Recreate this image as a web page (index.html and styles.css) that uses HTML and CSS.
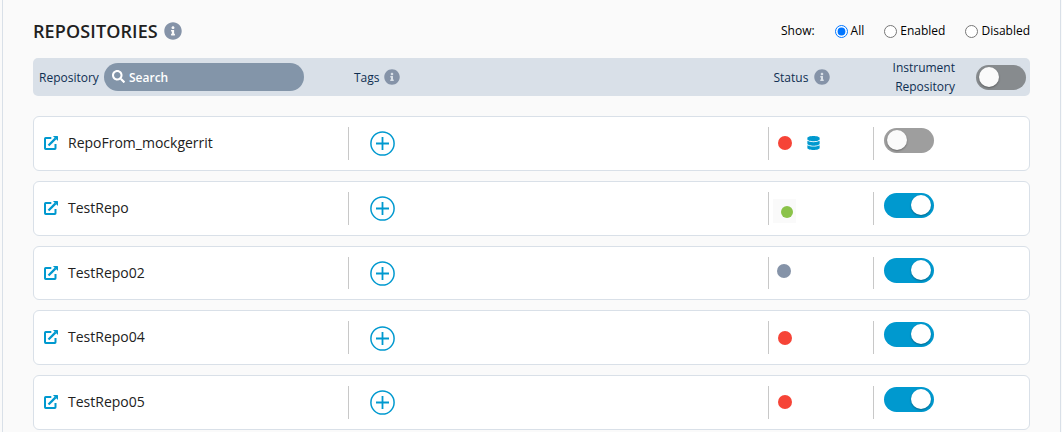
FILE: index.html
```
<!DOCTYPE html>
<html lang="en">
<head>
<meta charset="utf-8">
<title>Repositories</title>
<link rel="stylesheet" href="styles.css">
</head>
<body>
<svg class="defs" width="0" height="0">
  <symbol id="info" viewBox="0 0 512 512"><path d="M256 8C119 8 8 119 8 256s111 248 248 248 248-111 248-248S393 8 256 8zm0 110c23 0 42 19 42 42s-19 42-42 42-42-19-42-42 19-42 42-42zm56 254c0 7-5 12-12 12h-88c-7 0-12-5-12-12v-24c0-7 5-12 12-12h12v-64h-12c-7 0-12-5-12-12v-24c0-7 5-12 12-12h64c7 0 12 5 12 12v100h12c7 0 12 5 12 12v24z"/></symbol>
  <symbol id="search" viewBox="0 0 512 512"><path d="M505 442.7L405.3 343c-4.500-4.500-10.600-7-17-7H372c27.600-35.300 44-79.700 44-128C416 93.100 322.900 0 208 0S0 93.100 0 208s93.100 208 208 208c48.300 0 92.700-16.400 128-44v16.300c0 6.400 2.500 12.500 7 17l99.700 99.700c9.400 9.400 24.600 9.400 33.900 0l28.300-28.300c9.400-9.400 9.400-24.600.1-34zM208 336c-70.700 0-128-57.200-128-128 0-70.700 57.200-128 128-128 70.700 0 128 57.200 128 128 0 70.700-57.200 128-128 128z"/></symbol>
  <symbol id="link" viewBox="0 0 14 14"><path d="M7.300 2.100H1.700Q1 2.100 1 2.700v9.600q0 .7.700.7h9.100q.7 0 .7-.7V8" fill="none" stroke="currentColor" stroke-width="2"/><path d="M4.500 9.500L11.600 2.400" fill="none" stroke="currentColor" stroke-width="2.300"/><path d="M8.900 0H13.500Q14 0 14 .5V5.100Z"/></symbol>
  <symbol id="plus" viewBox="0 0 25 25"><g fill="none" stroke="currentColor" stroke-width="1.500"><circle cx="12.500" cy="12.500" r="11.600"/><path d="M12.500 6v13M6 12.500h13" stroke-width="1.800"/></g></symbol>
  <symbol id="database" viewBox="0 0 448 512"><path d="M448 73.143v45.714C448 159.143 347.667 192 224 192S0 159.143 0 118.857V73.143C0 32.857 100.333 0 224 0s224 32.857 224 73.143zM448 176v102.857C448 319.143 347.667 352 224 352S0 319.143 0 278.857V176c48.125 33.143 136.208 48.572 224 48.572S399.874 209.143 448 176zm0 160v102.857C448 479.143 347.667 512 224 512S0 479.143 0 438.857V336c48.125 33.143 136.208 48.572 224 48.572S399.874 369.143 448 336z"/></symbol>
</svg>
<main class="panel">
  <header class="titlebar">
    <h1>REPOSITORIES</h1>
    <svg class="info info-large"><use href="#info"/></svg>
    <form class="filters">
      <span class="show">Show:</span>
      <label class="all"><input type="radio" name="show" checked>All</label>
      <label class="enabled"><input type="radio" name="show">Enabled</label>
      <label class="disabled"><input type="radio" name="show">Disabled</label>
    </form>
  </header>
  <div class="columns">
    <div class="col-repo"><span class="repo-label">Repository</span><div class="search"><svg><use href="#search"/></svg><span>Search</span></div></div>
    <div class="col-tags"><span>Tags</span><svg class="info"><use href="#info"/></svg></div>
    <div class="col-status"><span>Status</span><svg class="info"><use href="#info"/></svg></div>
    <div class="col-instrument">Instrument<br>Repository</div>
    <div class="toggle all-toggle"></div>
  </div>
  <div class="list">
    <div class="row">
      <div class="name"><svg class="link"><use href="#link"/></svg><span>RepoFrom_mockgerrit</span></div>
      <div class="cell tags"><svg class="plus"><use href="#plus"/></svg></div>
      <div class="cell status"><i class="dot red"></i><svg class="database"><use href="#database"/></svg></div>
      <div class="cell switch"><div class="toggle"></div></div>
    </div>
    <div class="row">
      <div class="name"><svg class="link"><use href="#link"/></svg><span>TestRepo</span></div>
      <div class="cell tags"><svg class="plus"><use href="#plus"/></svg></div>
      <div class="cell status"><div class="patch"><i class="dot green"></i></div></div>
      <div class="cell switch"><div class="toggle on"></div></div>
    </div>
    <div class="row short">
      <div class="name"><svg class="link"><use href="#link"/></svg><span>TestRepo02</span></div>
      <div class="cell tags"><svg class="plus"><use href="#plus"/></svg></div>
      <div class="cell status"><i class="dot gray"></i></div>
      <div class="cell switch"><div class="toggle on"></div></div>
    </div>
    <div class="row">
      <div class="name"><svg class="link"><use href="#link"/></svg><span>TestRepo04</span></div>
      <div class="cell tags"><svg class="plus low"><use href="#plus"/></svg></div>
      <div class="cell status"><i class="dot red low"></i></div>
      <div class="cell switch"><div class="toggle on"></div></div>
    </div>
    <div class="row">
      <div class="name"><svg class="link"><use href="#link"/></svg><span>TestRepo05</span></div>
      <div class="cell tags"><svg class="plus"><use href="#plus"/></svg></div>
      <div class="cell status"><i class="dot red"></i></div>
      <div class="cell switch"><div class="toggle on"></div></div>
    </div>
  </div>
</main>
</body>
</html>
```
FILE: styles.css
```
* { box-sizing: border-box; }
body { margin: 0; height: 432px; overflow: hidden; background: #fafafa; font-family: "Open Sans", sans-serif; font-size: 12px; color: #000; }
svg { display: block; fill: currentColor; flex: none; }
.defs { position: absolute; }
.panel { margin: 0 1px 0 2px; height: 432px; padding: 0 30px; border-left: 1px solid #d9e0e8; border-right: 1px solid #d9e0e8; }
.titlebar { height: 58px; padding-top: 4px; display: flex; align-items: center; }
h1 { margin: 0; width: 131px; font-size: 18px; line-height: 26px; font-weight: 600; letter-spacing: .12px; color: #212121; white-space: nowrap; }
.info { width: 16px; height: 16px; color: #8593a8; }
.info-large { width: 18px; height: 18px; }
.filters { display: flex; align-items: center; flex: 1; justify-content: flex-end; line-height: 18px; }
.filters label { display: flex; align-items: center; }
.filters input { width: 13px; height: 13px; margin: 0 3px 0 0; }
.show { margin-right: 20px; }
.all, .enabled { margin-right: 20px; }
.columns { height: 38px; width: 997px; display: grid; grid-template-columns: 321px 419.500px 100.500px 83px 1fr; align-items: center; border-radius: 5px; background: #d9e0e8; color: #0f2f52; }
.col-repo, .col-tags, .col-status { display: flex; align-items: center; }
.col-repo { padding-left: 6px; }
.repo-label { width: 65px; }
.search { width: 200px; height: 28px; border-radius: 14px; background: #8395a9; color: #fff; font-weight: 600; display: flex; align-items: center; padding-left: 8px; }
.search svg { width: 13px; height: 13px; margin: 0 4px 2px 0; }
.col-tags span { width: 30px; }
.col-status span { width: 40px; }
.col-instrument { text-align: right; line-height: 19px; padding-right: 2px; }
.toggle { width: 50px; height: 25px; border-radius: 13px; background: #9e9e9e; padding: 2px 3px; display: flex; }
.toggle::before { content: ""; width: 20px; height: 20px; border-radius: 50%; background: #fafafa; box-shadow: 0 1px 2px #0005; }
.toggle.on { background: #0099cf; justify-content: flex-end; }
.toggle.on::before { background: #fff; }
.all-toggle { margin-left: 19px; background: #878b8e; }
.list { margin-top: 20px; width: 997px; display: flex; flex-direction: column; gap: 10px; }
.row { height: 55px; border: 1px solid #d9e0e8; border-radius: 6px; background: #fff; display: grid; grid-template-columns: 314px 420px 105px 1fr; padding-top: 10px; }
.row.short { height: 54px; }
.name { height: 33px; display: flex; align-items: flex-start; padding: 9px 0 0 10px; font-size: 14px; line-height: 20px; color: #212121; }
.name span { margin-top: -3px; }
.link { width: 14px; height: 14px; margin-right: 10px; color: #0099cf; }
.cell { height: 33px; border-left: 1px solid #c8c8c8; display: flex; align-items: flex-start; }
.short .cell { height: 32px; }
.plus { width: 25px; height: 25px; margin: 4px 0 0 21px; color: #0099cf; }
.plus.low { margin-top: 5px; }
.dot { display: block; width: 14px; height: 14px; border-radius: 50%; margin: 9px 0 0 9px; }
.dot.low { margin-top: 10px; }
.red { background: #f64437; }
.gray { background: #8593a8; margin: 7px 0 0 8px; }
.patch { width: 23px; height: 24px; margin: 7px 0 0 4px; padding: 7px 0 0 7.500px; background: #fafafa; }
.green { width: 12px; height: 12px; margin: 0; background: #8bc34a; }
.database { width: 13px; height: 14px; margin: 9px 0 0 15px; color: #0099cf; }
.switch { padding: 1px 0 0 10px; }
```
